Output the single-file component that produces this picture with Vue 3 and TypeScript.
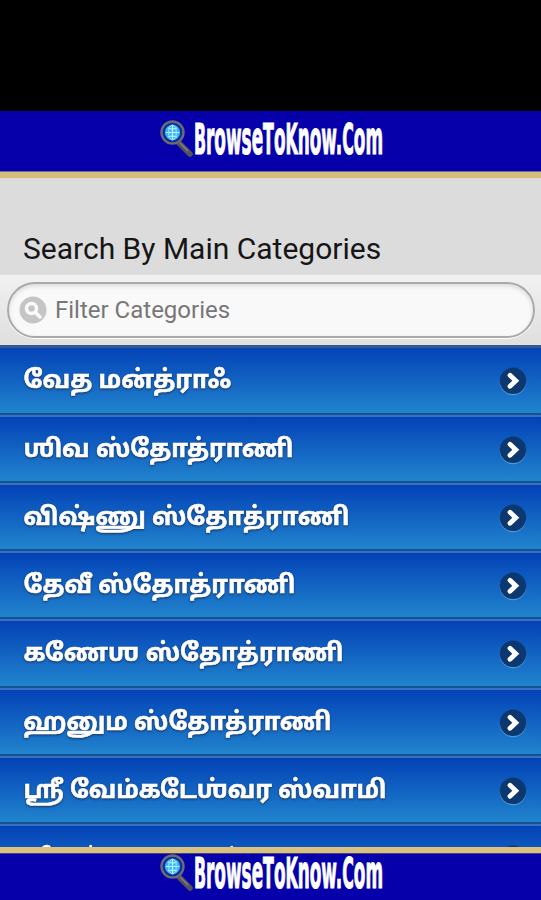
<script setup lang="ts">
interface Category {
  label: string
  width: number
}

const categories: Category[] = [
  { label: 'வேத மன்த்ராஃ', width: 208 },
  { label: 'ஶிவ ஸ்தோத்ராணி', width: 270 },
  { label: 'விஷ்ணு ஸ்தோத்ராணி', width: 326 },
  { label: 'தேவீ ஸ்தோத்ராணி', width: 272 },
  { label: 'கணேஶ ஸ்தோத்ராணி', width: 320 },
  { label: 'ஹனும ஸ்தோத்ராணி', width: 308 },
  { label: 'ஶ்ரீ வேம்கடேஶ்வர ஸ்வாமி', width: 363 },
  { label: 'மஹேஶ்வர நாமாவளம்', width: 216 },
]
const bars = ['header', 'footer'] as const
</script>

<template>
  <div class="screen">
    <div class="status"></div>
    <div v-for="bar in bars" :key="bar" class="bar" :class="bar">
      <svg class="logo" width="230" height="40" viewBox="0 0 230 40">
        <path d="M23 23 L34 34" stroke="#55535b" stroke-width="5.5" stroke-linecap="round" />
        <path d="M24 23 L32 31" stroke="#85838a" stroke-width="1.3" />
        <circle cx="16.5" cy="12.5" r="11" fill="#102a9c" stroke="#6a6b74" stroke-width="2.4" />
        <circle cx="16.5" cy="12.5" r="7.7" fill="#35b6f4" />
        <path d="M10 12.5H23M16.5 5V20M12 8Q16.5 10 21 8M12 17Q16.5 15 21 17" fill="none" stroke="#c5f5ff" stroke-width="1.2" />
        <ellipse cx="16.5" cy="12.5" rx="3.8" ry="7.5" fill="none" stroke="#a2e8ff" />
        <text class="brand" x="38" y="33.5" textLength="189" lengthAdjust="spacingAndGlyphs"><tspan class="cap">B</tspan>rowse<tspan class="cap">T</tspan>o<tspan class="cap">K</tspan>now.<tspan class="cap">C</tspan>om</text>
      </svg>
    </div>
    <h1 class="title">Search By Main Categories</h1>
    <div class="search">
      <div class="field">
        <svg width="28" height="28" viewBox="0 0 28 28">
          <circle cx="14" cy="14" r="13.5" fill="#c5c5c5" />
          <circle cx="12.5" cy="12.5" r="5" fill="none" stroke="#fafafa" stroke-width="3.5" />
          <path d="M16 16L21 21" stroke="#fafafa" stroke-width="3.5" stroke-linecap="round" />
        </svg>
        <span>Filter Categories</span>
      </div>
    </div>
    <div class="list">
      <div v-for="item in categories" :key="item.label" class="row">
        <svg class="label" width="400" height="64" viewBox="0 0 400 64">
          <text class="shade" x="0.5" y="40" :textLength="item.width" lengthAdjust="spacingAndGlyphs">{{ item.label }}</text>
        </svg>
        <svg class="arrow" width="30" height="32" viewBox="0 0 30 32">
          <circle cx="15" cy="17" r="13.2" fill="#4c9bdc" />
          <circle cx="15" cy="15.8" r="13.2" fill="#0c386f" />
          <path d="M12 10.3L17.8 15.8L12 21.3" fill="none" stroke="#fff" stroke-width="4.8" stroke-linecap="round" />
        </svg>
      </div>
    </div>
  </div>
</template>

<style>
body { margin: 0; }
</style>
<style scoped>
.screen { width: 541px; height: 900px; overflow: hidden; display: flex; flex-direction: column; background: #dcdcdc; font-family: Roboto, "Noto Sans", sans-serif; }
.status { height: 111px; flex: none; background: #000; }
.bar { box-sizing: border-box; flex: none; display: flex; background: #0500aa; padding-left: 156px; }
.header { height: 67px; border-bottom: 6px solid #d4bd7b; padding-top: 9px; box-shadow: inset 0 -1px #706a9d; }
.footer { order: 2; height: 53px; border-top: 6px solid #dac17e; padding-top: 1px; box-shadow: inset 0 1px #49428a; }
.logo { display: block; overflow: visible; }
.brand { font-family: "DejaVu Sans Condensed", "DejaVu Sans", sans-serif; font-weight: 700; font-size: 46px; fill: #fff; stroke: #fff; stroke-width: 1.1px; }
.cap { font-size: 43px; }
.title { box-sizing: border-box; height: 97px; flex: none; margin: 0; padding: 53px 0 0 23px; font-size: 30px; line-height: 36px; font-weight: 400; color: #161616; white-space: nowrap; background: #dcdcdc; }
.search { box-sizing: border-box; height: 70px; flex: none; padding: 7px 6px 0 7px; background: linear-gradient(#f1f1f1, #dfdfdf); }
.field { box-sizing: border-box; height: 56px; border: 2px solid #a9a9a9; border-radius: 28px; background: #f9f9f9; box-shadow: inset 0 2px 4px #d9d9d9, 0 1px #fff; display: flex; align-items: center; gap: 8px; padding-left: 10px; color: #777; font-size: 24px; }
.list { flex: 1; min-height: 0; overflow: hidden; }
.row { box-sizing: border-box; height: 68.1px; border-top: 2px solid #3971be; border-bottom: 2px solid #145190; background: linear-gradient(#0342b7, #2184cd); display: flex; justify-content: space-between; padding: 0 13px 0 23px; }
.row:first-child { height: 70.2px; border-top: 3px solid #35588f; }
.label { display: block; flex: none; overflow: visible; }
.shade { font-family: "Noto Sans Tamil", "Noto Sans", sans-serif; font-size: 24.5px; font-weight: 700; fill: #fff; stroke: #fff; stroke-width: .55px; filter: drop-shadow(0 1px 1px #17345e); }
.arrow { margin-top: 17px; flex: none; }
</style>
